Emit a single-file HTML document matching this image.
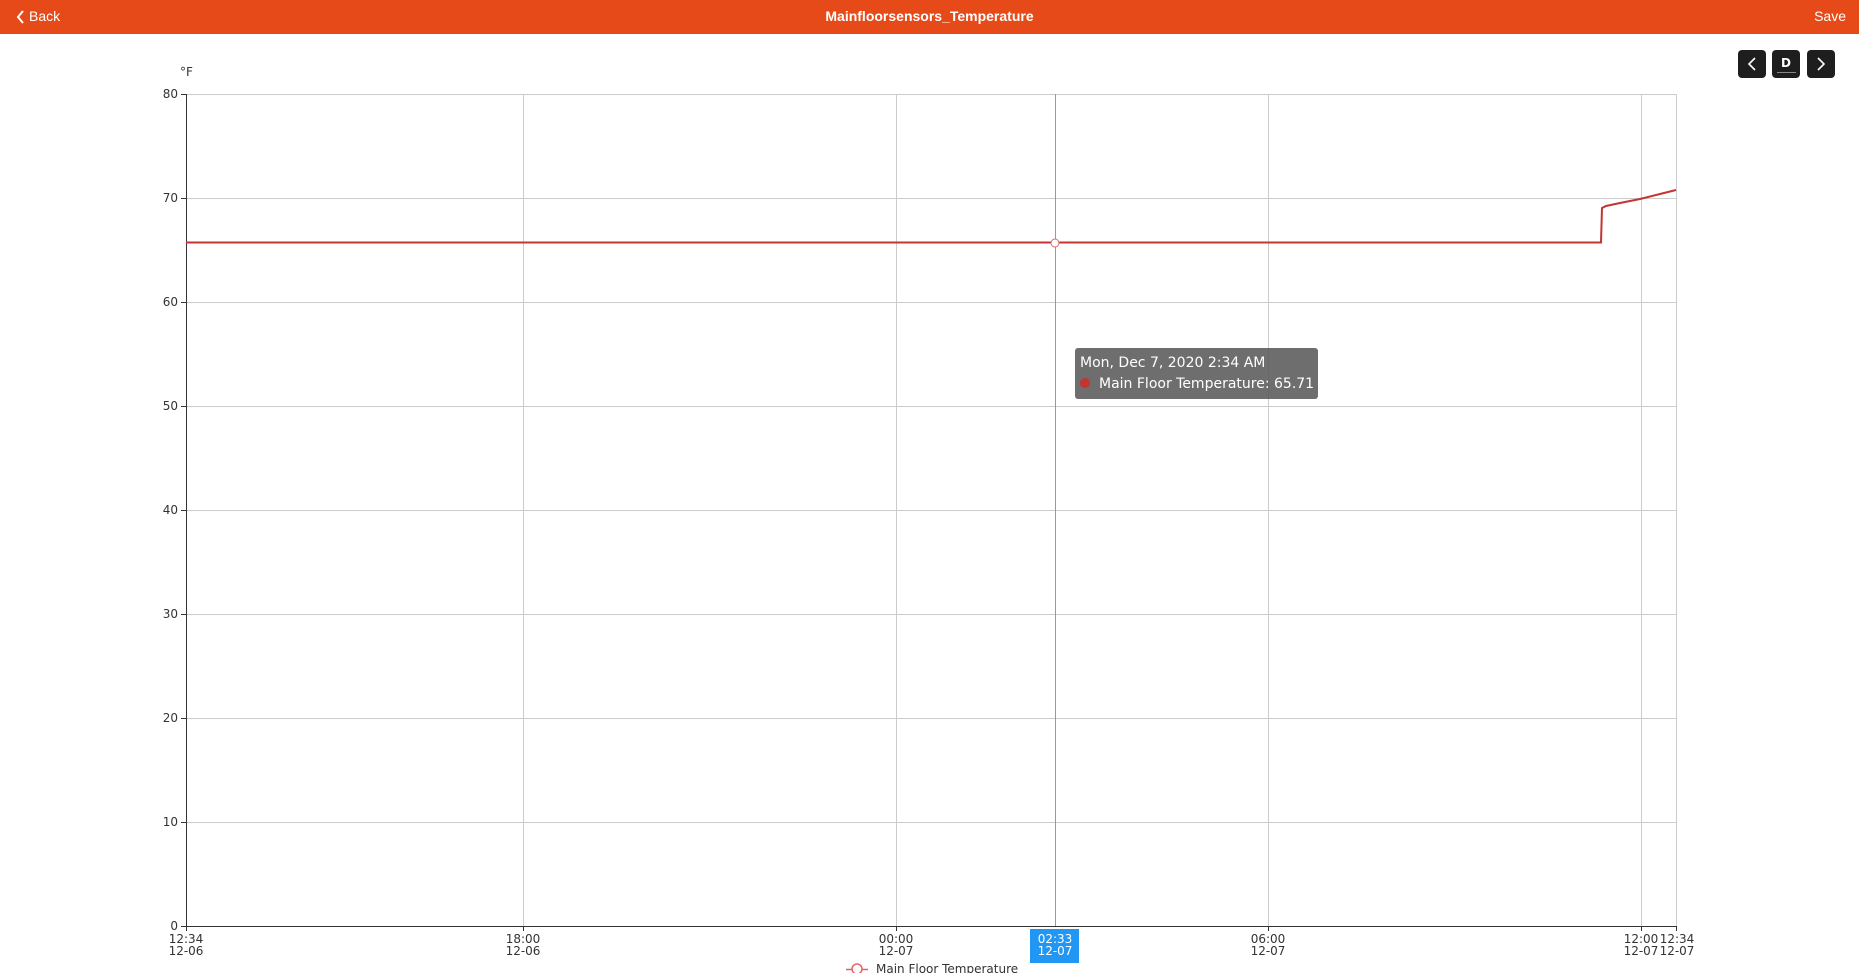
<!DOCTYPE html>
<html><head><meta charset="utf-8"><style>
body{margin:0;width:1859px;height:973px;overflow:hidden;background:#fff;font-family:"DejaVu Sans","Liberation Sans",sans-serif;position:relative}
.hdr{position:absolute;left:0;top:0;width:1859px;height:34px;background:#e64a19;color:#fff;font-family:"Liberation Sans",sans-serif;font-size:14px}
.btn{position:absolute;top:50px;width:28px;height:28px;background:#1e1e1e;border-radius:4px}
.tt{position:absolute;left:1075px;top:348px;width:243px;height:51px;background:rgba(90,90,90,.88);border-radius:3px;color:#fff;font-size:14px;box-sizing:border-box;padding:5px 0 0 5px;line-height:21px}
</style></head><body>
<div class="hdr">
<svg style="position:absolute;left:16px;top:9px" width="10" height="16"><path d="M7 2 L2 8 L7 14" stroke="#fff" stroke-width="2" fill="none"/></svg>
<span style="position:absolute;left:29px;top:8px">Back</span>
<span style="position:absolute;left:0;width:1859px;text-align:center;top:8px;font-weight:bold">Mainfloorsensors_Temperature</span>
<span style="position:absolute;right:13px;top:8px">Save</span>
</div>
<div class="btn" style="left:1738px"><svg width="28" height="28"><path d="M17 8 L11 14 L17 20" stroke="#fff" stroke-width="1.6" fill="none"/></svg></div>
<div class="btn" style="left:1772px;color:#fff;font-size:12px;font-weight:bold;text-align:center;line-height:27px">D<div style="position:absolute;left:5px;top:22px;width:19px;height:1px;background:#888"></div></div>
<div class="btn" style="left:1807px"><svg width="28" height="28"><path d="M11 8 L17 14 L11 20" stroke="#fff" stroke-width="1.6" fill="none"/></svg></div>
<svg width="1859" height="973" style="position:absolute;left:0;top:0" font-family="DejaVu Sans, sans-serif" font-size="12" fill="#333">
<text x="180" y="76">°F</text>
<g stroke="#ccc" stroke-width="1">
<line x1="186" x2="1676" y1="94.5" y2="94.5"/><line x1="186" x2="1676" y1="198.5" y2="198.5"/><line x1="186" x2="1676" y1="302.5" y2="302.5"/><line x1="186" x2="1676" y1="406.5" y2="406.5"/><line x1="186" x2="1676" y1="510.5" y2="510.5"/><line x1="186" x2="1676" y1="614.5" y2="614.5"/><line x1="186" x2="1676" y1="718.5" y2="718.5"/><line x1="186" x2="1676" y1="822.5" y2="822.5"/>
<line x1="523.5" x2="523.5" y1="94" y2="926"/><line x1="896.5" x2="896.5" y1="94" y2="926"/><line x1="1268.5" x2="1268.5" y1="94" y2="926"/><line x1="1641.5" x2="1641.5" y1="94" y2="926"/><line x1="1676.5" x2="1676.5" y1="94" y2="926"/>
</g>
<line x1="1055.5" x2="1055.5" y1="94" y2="926" stroke="#999"/>
<g stroke="#333"><line x1="186.5" x2="186.5" y1="94" y2="927"/><line x1="186" x2="1676" y1="926.5" y2="926.5"/>
<line x1="181" x2="186" y1="94.5" y2="94.5"/><line x1="181" x2="186" y1="198.5" y2="198.5"/><line x1="181" x2="186" y1="302.5" y2="302.5"/><line x1="181" x2="186" y1="406.5" y2="406.5"/><line x1="181" x2="186" y1="510.5" y2="510.5"/><line x1="181" x2="186" y1="614.5" y2="614.5"/><line x1="181" x2="186" y1="718.5" y2="718.5"/><line x1="181" x2="186" y1="822.5" y2="822.5"/><line x1="181" x2="186" y1="926.5" y2="926.5"/>
<line x1="186.5" x2="186.5" y1="926" y2="931"/><line x1="523.5" x2="523.5" y1="926" y2="931"/><line x1="896.5" x2="896.5" y1="926" y2="931"/><line x1="1268.5" x2="1268.5" y1="926" y2="931"/><line x1="1641.5" x2="1641.5" y1="926" y2="931"/><line x1="1676.5" x2="1676.5" y1="926" y2="931"/></g>
<g text-anchor="end"><text x="178" y="98">80</text><text x="178" y="202">70</text><text x="178" y="306">60</text><text x="178" y="410">50</text><text x="178" y="514">40</text><text x="178" y="618">30</text><text x="178" y="722">20</text><text x="178" y="826">10</text><text x="178" y="930">0</text></g>
<g text-anchor="middle"><text x="186" y="943">12:34</text><text x="186" y="955">12-06</text><text x="523" y="943">18:00</text><text x="523" y="955">12-06</text><text x="896" y="943">00:00</text><text x="896" y="955">12-07</text><text x="1268" y="943">06:00</text><text x="1268" y="955">12-07</text><text x="1641" y="943">12:00</text><text x="1641" y="955">12-07</text><text x="1677" y="943">12:34</text><text x="1677" y="955">12-07</text></g>
<rect x="1030" y="929" width="49" height="34" fill="#2196f3"/>
<text x="1055" y="943" fill="#fff" text-anchor="middle">02:33</text><text x="1055" y="955" fill="#fff" text-anchor="middle">12-07</text>
<polyline points="186,242.5 1601,242.5 1602,208 1606,206 1620,203 1640,199 1660,194 1676,190" fill="none" stroke="#c23531" stroke-width="2"/>
<circle cx="1055" cy="243" r="4" fill="#fff" stroke="#e06666" stroke-width="1"/>
<line x1="846" x2="868" y1="969.5" y2="969.5" stroke="#e06666" stroke-width="1.5"/><circle cx="857" cy="969" r="5" fill="#fff" stroke="#e06666" stroke-width="1.5"/>
<text x="876" y="973">Main Floor Temperature</text>
</svg>
<div class="tt">Mon, Dec 7, 2020 2:34 AM<br><span style="display:inline-block;width:10px;height:10px;border-radius:5px;background:#c23531;margin-right:9px"></span>Main Floor Temperature: 65.71</div>
</body></html>
